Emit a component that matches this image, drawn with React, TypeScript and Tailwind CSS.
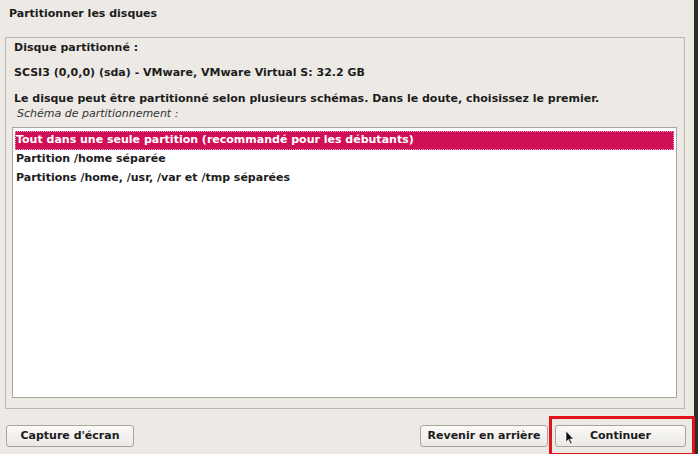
import React from "react";

const font = { fontFamily: '"DejaVu Sans", "Liberation Sans", sans-serif' };

function Btn({ children, className = "" }: { children: React.ReactNode; className?: string }) {
  return (
    <div
      className={
        "h-[22px] flex items-center justify-center rounded-[3px] border border-[#a9a49c] bg-gradient-to-b from-[#fbfaf9] to-[#ece9e5] text-[11px] font-bold text-[#1c1c1c] " +
        className
      }
    >
      {children}
    </div>
  );
}

export default function App() {
  const rows = [
    "Tout dans une seule partition (recommandé pour les débutants)",
    "Partition /home séparée",
    "Partitions /home, /usr, /var et /tmp séparées",
  ];
  return (
    <div className="relative w-[698px] h-[454px] flex overflow-hidden bg-[#edeae6]" style={font}>
      <div className="w-[694px] h-full flex flex-col">
        <div className="h-[37px] pl-[9px] pt-[7px] text-[11px] font-bold text-[#1c1c1c] leading-[14px]">
          Partitionner les disques
        </div>
        <div className="ml-[5px] w-[680px] h-[372px] border border-[#bdb8af] flex flex-col px-[6px]">
          <div className="pl-[2px] pt-[3px] text-[11px] font-bold text-[#1c1c1c] leading-[13px]">
            Disque partitionné :
          </div>
          <div className="pl-[2px] mt-[12px] text-[11px] font-bold text-[#1c1c1c] leading-[13px]">
            SCSI3 (0,0,0) (sda) - VMware, VMware Virtual S: 32.2 GB
          </div>
          <div className="pl-[2px] mt-[13px] text-[11px] font-bold text-[#1c1c1c] leading-[13px]">
            Le disque peut être partitionné selon plusieurs schémas. Dans le doute, choisissez le premier.
          </div>
          <div className="pl-[5px] mt-[2px] text-[11px] italic text-[#333] leading-[13px]">
            Schéma de partitionnement :
          </div>
          <div className="mt-[7px] w-[665px] h-[271px] border border-[#a9a49c] bg-white px-[2px] pt-[3px]">
            {rows.map((r, i) => (
              <div
                key={r}
                className={
                  "h-[19px] flex items-center pl-[1px] text-[11px] font-bold " +
                  (i === 0
                    ? "bg-[#cf0f56] text-white outline outline-1 outline-dotted outline-[#f2a5c0] -outline-offset-1"
                    : "text-[#1c1c1c]")
                }
              >
                {r}
              </div>
            ))}
          </div>
        </div>
        <div className="flex-1 flex items-center px-[6px] pt-[9px]">
          <Btn className="w-[128px]">Capture d'écran</Btn>
          <div className="flex-1" />
          <Btn className="w-[128px]">Revenir en arrière</Btn>
          <Btn className="w-[131px] ml-[7px] mr-[2px]">Continuer</Btn>
        </div>
      </div>
      <div className="w-[4px] h-full bg-[#2b2b2b]" />
      <div className="absolute left-[549px] top-[416px] w-[146px] h-[40px] border-[3px] border-[#e0121b]" />
      <svg className="absolute left-[565px] top-[430px]" width="10" height="15" viewBox="0 0 10 15">
        <path d="M1 1 L1 12 L3.5 9.5 L5.5 14 L7 13.3 L5 9 L8.5 9 Z" fill="#111" stroke="#fff" strokeWidth="0.6" />
      </svg>
    </div>
  );
}
